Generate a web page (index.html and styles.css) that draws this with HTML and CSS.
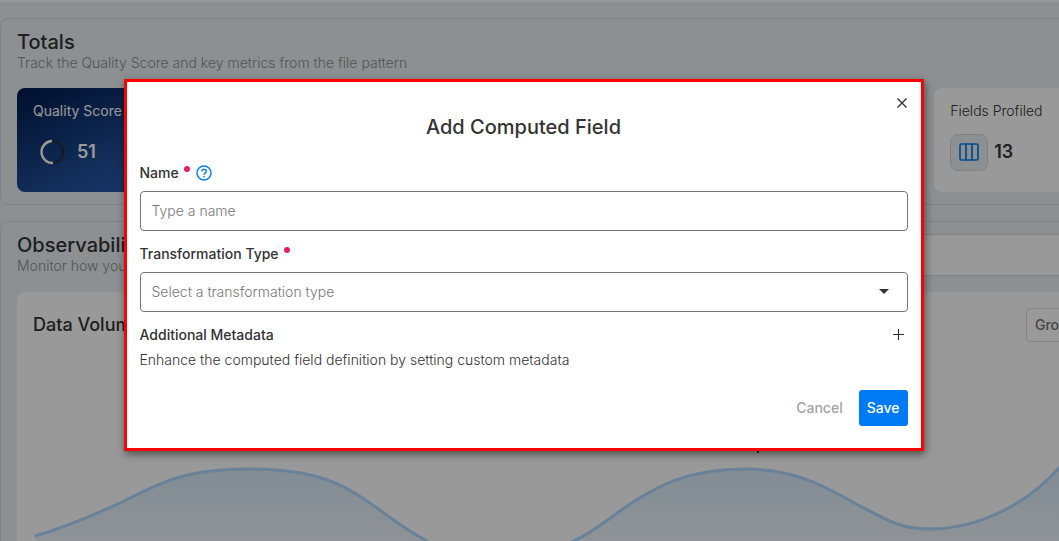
FILE: index.html
```html
<!DOCTYPE html>
<html lang="en">
<head>
<meta charset="utf-8">
<title>Add Computed Field</title>
<link rel="stylesheet" href="styles.css">
</head>
<body>
<div class="app">
  <main class="page">
    <section class="panel">
      <header>
        <h2 class="panel-title">Totals</h2>
        <p class="panel-sub">Track the Quality Score and key metrics from the file pattern</p>
      </header>
      <div class="cards">
        <article class="card card-score">
          <h3 class="card-label">Quality Score</h3>
          <div class="card-row">
            <svg class="ring" viewBox="0 0 26 26" aria-hidden="true">
              <circle cx="13" cy="13" r="11" fill="none" stroke="#242d48" stroke-width="2.4"/>
              <path d="M14 24A11 11 0 1 1 13 2" fill="none" stroke="#fff" stroke-width="2.4"/>
            </svg>
            <span class="card-value">51</span>
          </div>
        </article>
        <article class="card card-last">
          <h3 class="card-label">Fields Profiled</h3>
          <div class="card-row">
            <span class="card-icon">
              <svg viewBox="0 0 20 18" width="20" height="18" fill="none" stroke="#007bf3" stroke-width="1.7" aria-hidden="true">
                <rect x="1" y="1" width="18" height="16" rx="1.5"/>
                <path d="M7 1v16M13 1v16"/>
              </svg>
            </span>
            <span class="card-value">13</span>
          </div>
        </article>
      </div>
    </section>

    <section class="panel">
      <header class="panel-head">
        <div>
          <h2 class="panel-title">Observability</h2>
          <p class="panel-sub">Monitor how your data</p>
        </div>
        <div class="filter-bar"></div>
      </header>
      <div class="chart-card">
        <div class="chart-head">
          <h3 class="chart-title">Data Volume</h3>
          <button class="group-btn" type="button">Group by</button>
        </div>
        <svg class="chart" viewBox="33 342 1175 200" aria-hidden="true">
          <defs>
            <linearGradient id="area" x1="0" y1="469" x2="0" y2="570" gradientUnits="userSpaceOnUse">
              <stop offset="0" stop-color="#d9ebfa"/>
              <stop offset="1" stop-color="#f6f9fd"/>
            </linearGradient>
          </defs>
          <path fill="url(#area)" d="M35 536C63 528 90 517 124 501C160 483 185 469 248 469C320 469 345 484 388 516C428 545 450 556 490 556C560 556 580 540 620 511C658 484 690 469 745 469C800 469 830 490 860 506C885 519 900 529 929 529C980 529 1030 503 1063 463L1063 542H35Z"/>
          <path fill="none" stroke="#afd8ff" stroke-width="3" d="M35 536C63 528 90 517 124 501C160 483 185 469 248 469C320 469 345 484 388 516C428 545 450 556 490 556C560 556 580 540 620 511C658 484 690 469 745 469C800 469 830 490 860 506C885 519 900 529 929 529C980 529 1030 503 1063 463"/>
          <path stroke="#555" stroke-width="2" d="M758 445v8"/>
        </svg>
      </div>
    </section>
  </main>

  <div class="overlay">
    <form class="modal" role="dialog" aria-labelledby="dialog-title">
      <button class="icon-btn close" type="button" aria-label="Close">
        <svg viewBox="0 0 10 10" width="10" height="10" fill="none" stroke="#333" stroke-width="1.4" aria-hidden="true"><path d="M.5.5l9 9M9.5.5l-9 9"/></svg>
      </button>
      <h1 class="modal-title" id="dialog-title">Add Computed Field</h1>

      <div class="field">
        <div class="label-row">
          <label for="name">Name</label>
          <span class="required"></span>
          <svg class="help" viewBox="0 0 16 16" fill="none" stroke="#0b80f5" stroke-width="1.5" aria-hidden="true">
            <circle cx="8" cy="8" r="7"/>
            <path d="M5.7 6.4A2.2 2.2 0 0 1 8 4.3c1.3 0 2.3.8 2.3 2C10.300 7.900 8 8 8 9.800"/>
            <path d="M8 10.900v1.600"/>
          </svg>
        </div>
        <input class="control" id="name" type="text" placeholder="Type a name">
      </div>

      <div class="field">
        <div class="label-row">
          <label for="type">Transformation Type</label>
          <span class="required"></span>
        </div>
        <div class="select-wrap">
          <select class="control" id="type">
            <option>Select a transformation type</option>
          </select>
          <svg class="caret" viewBox="0 0 10 5" width="10" height="5" aria-hidden="true"><path d="M0 0h10L5 5z" fill="#333"/></svg>
        </div>
      </div>

      <div class="meta">
        <div class="meta-head">
          <h2 class="meta-title">Additional Metadata</h2>
          <button class="icon-btn" type="button" aria-label="Add metadata">
            <svg viewBox="0 0 11 11" width="11" height="11" fill="none" stroke="#333" stroke-width="1.2" aria-hidden="true"><path d="M5.500 0v11M0 5.500h11"/></svg>
          </button>
        </div>
        <p class="meta-text">Enhance the computed field definition by setting custom metadata</p>
      </div>

      <div class="actions">
        <button class="btn btn-plain" type="button">Cancel</button>
        <button class="btn btn-primary" type="submit">Save</button>
      </div>
    </form>
  </div>
</div>
</body>
</html>
```
FILE: styles.css
```css
* { box-sizing: border-box; }

body {
  margin: 0;
  background: #ebf1f5;
  color: #333;
  font: 400 14px/20px Inter, "Open Sans", sans-serif;
}

h1, h2, h3, p { margin: 0; }

button, input, select { font: inherit; color: inherit; }

button { cursor: pointer; }

.app {
  position: relative;
  height: 100vh;
  overflow: hidden;
}

.page {
  display: flex;
  flex-direction: column;
  gap: 16px;
  min-width: 1241px;
  padding-top: 16px;
  border-top: 2px solid #fff;
}

.panel {
  padding: 12px 16px;
  border: 1px solid #d3dbe2;
  border-radius: 8px;
}

.panel-title {
  font-size: 20px;
  font-weight: 500;
  line-height: 22px;
}

.panel-sub {
  color: #8a8c8e;
  font-weight: 300;
}

.cards {
  display: grid;
  grid-template-columns: repeat(4, 1fr);
  gap: 16px;
  margin-top: 15px;
}

.card {
  height: 104px;
  padding: 13px 16px;
  border-radius: 8px;
  background: #fff;
}

.card-score {
  color: #fff;
  background: linear-gradient(155deg, #001a4d, #215099 50%, #2c6cd0);
}

.card-last { grid-column: 4; }

.card-label {
  font-size: 14px;
  font-weight: 300;
}

.card-score .card-label { font-weight: 400; }

.card-row {
  display: flex;
  align-items: center;
  gap: 6px;
  height: 38px;
  margin-top: 12px;
}

.card-score .card-row {
  gap: 12px;
  padding-left: 6px;
}

.ring {
  width: 26px;
  height: 26px;
}

.card-icon {
  display: grid;
  place-items: center;
  width: 38px;
  height: 37px;
  border: 1px solid #d3dbe2;
  border-radius: 8px;
  background: #ebf1f5;
}

.card-value {
  font-size: 18px;
  font-weight: 600;
}

.panel-head {
  display: flex;
  justify-content: space-between;
}

.filter-bar {
  width: 480px;
  height: 42px;
  border: 1px solid #d3dbe2;
  border-radius: 4px;
  background: #fff;
}

.chart-card {
  margin-top: 16px;
  padding: 16px;
  border-radius: 8px;
  background: #fff;
}

.chart-head {
  display: flex;
  align-items: center;
  justify-content: space-between;
}

.chart-title {
  font-size: 18px;
  font-weight: 500;
}

.group-btn {
  width: 182px;
  height: 34px;
  padding: 0 8px;
  border: 1px solid #ddd;
  border-radius: 4px;
  background: #fff;
  color: #777;
  font-weight: 500;
  text-align: left;
}

.chart {
  display: block;
  width: 100%;
}

.overlay {
  position: absolute;
  inset: 0;
  display: grid;
  place-items: center;
  padding: 0 12px 12px 0;
  background: rgba(0, 0, 0, .4);
}

.modal {
  position: relative;
  width: min(800px, 100%);
  padding: 31px 13px 22px;
  border: 3px solid #f00;
  background: #fff;
  box-shadow: 1px 3px 8px rgba(0, 0, 0, .5);
}

.icon-btn {
  display: grid;
  place-items: center;
  width: 18px;
  height: 18px;
  padding: 0;
  border: 0;
  background: none;
}

.close {
  position: absolute;
  top: 12px;
  right: 10px;
}

.modal-title {
  font-size: 20px;
  font-weight: 500;
  line-height: 28px;
  text-align: center;
}

.field { margin-top: 13px; }

.modal-title + .field { margin-top: 22px; }

.label-row {
  display: flex;
  align-items: center;
  height: 20px;
  margin-bottom: 8px;
  font-weight: 500;
}

.required {
  align-self: flex-start;
  width: 6px;
  height: 6px;
  margin: 3px 6px 0 5px;
  border-radius: 50%;
  background: #e91e63;
}

.help {
  width: 16px;
  height: 16px;
}

.control {
  display: block;
  width: 100%;
  height: 40px;
  padding: 0 11px;
  border: 1px solid #757575;
  border-radius: 4px;
  background: #fff;
  color: #777;
  font-weight: 300;
  appearance: none;
}

.control::placeholder { color: #777; }

.select-wrap {
  display: grid;
  align-items: center;
}

.select-wrap > * { grid-area: 1 / 1; }

.caret {
  justify-self: end;
  margin-right: 19px;
  pointer-events: none;
}

.meta { margin-top: 13px; }

.meta-head {
  display: flex;
  align-items: center;
  justify-content: space-between;
}

.meta-title {
  font-size: 14px;
  font-weight: 500;
}

.meta-text {
  margin-top: 5px;
  font-weight: 300;
}

.actions {
  display: flex;
  justify-content: flex-end;
  gap: 8px;
  margin-top: 20px;
}

.btn {
  height: 36px;
  padding: 0 8px;
  border: 0;
  border-radius: 3px;
  font-weight: 500;
}

.btn-plain {
  background: none;
  color: #a3a3a3;
}

.btn-primary {
  background: #007bf5;
  color: #fff;
}
```
